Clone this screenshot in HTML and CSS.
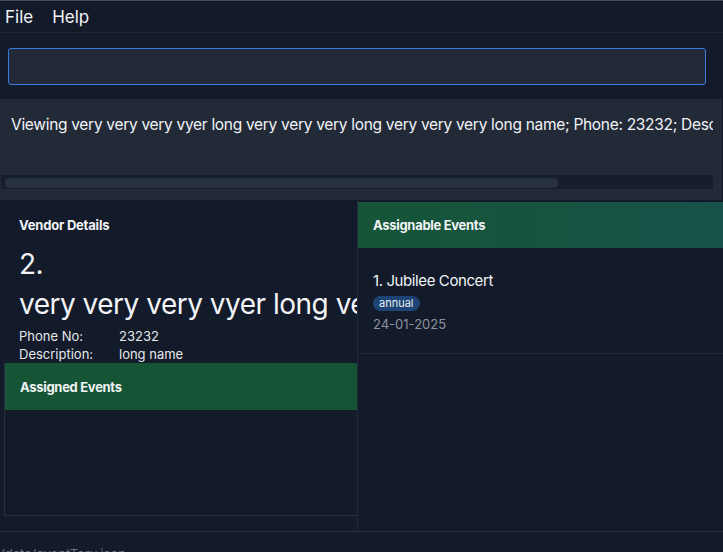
FILE: index.html
```html
<!DOCTYPE html>
<html>
<head>
<meta charset="utf-8">
<link rel="stylesheet" href="styles.css">
</head>
<body>
<div class="app">
  <div class="menubar">
    <span class="menu">File</span>
    <span class="menu">Help</span>
  </div>
  <div class="cmd-wrap">
    <div class="cmd"></div>
  </div>
  <div class="result">
    <div class="result-text">Viewing very very very vyer long very very very long very very very long name; Phone: 23232; Description: long name</div>
    <div class="hscroll"><div class="thumb"></div></div>
  </div>
  <div class="main">
    <div class="left">
      <div class="details">
        <div class="section-title">Vendor Details</div>
        <div class="big index">2.</div>
        <div class="big name">very very very vyer long very very very long very very very long name</div>
        <div class="field"><span class="label">Phone No:</span><span>23232</span></div>
        <div class="field"><span class="label">Description:</span><span>long name</span></div>
      </div>
      <div class="assigned">
        <div class="panel-head green">Assigned Events</div>
        <div class="panel-body"></div>
      </div>
    </div>
    <div class="right">
      <div class="panel-head teal">Assignable Events</div>
      <div class="list">
        <div class="card">
          <div class="card-title">1. Jubilee Concert</div>
          <span class="tag">annual</span>
          <div class="date">24-01-2025</div>
        </div>
      </div>
    </div>
  </div>
  <div class="status">/data/eventTory.json</div>
</div>
</body>
</html>
```
FILE: styles.css
```css
* { box-sizing: border-box; }
html, body { margin: 0; padding: 0; }
body {
  background: #131a29;
  font-family: Inter, "Noto Sans", sans-serif;
  color: #f1f3f6;
  width: 723px;
  height: 552px;
  overflow: hidden;
}
.app {
  border-top: 1px solid #4a4d52;
  height: 552px;
  display: flex;
  flex-direction: column;
}
.menubar {
  height: 32px;
  display: flex;
  align-items: center;
  gap: 19px;
  padding-left: 5px;
  border-bottom: 1px solid #1f2837;
  font-size: 17px;
}
.cmd-wrap {
  padding: 15px 17px 14px 8px;
}
.cmd {
  height: 37px;
  background: #222a38;
  border: 1px solid #3a7be0;
  border-radius: 3px;
}
.result {
  height: 101px;
  background: #222a38;
  padding: 16px 9px 0 1px;
  display: flex;
  flex-direction: column;
  overflow: hidden;
  border-right: 1px solid #111826;
}
.result-text {
  white-space: nowrap;
  font-size: 15.5px;
  letter-spacing: -0.3px;
  padding-left: 10px;
  height: 60px;
  line-height: 19px;
  overflow: hidden;
}
.hscroll {
  height: 14px;
  background: #161d2b;
  padding: 3px 4px;
}
.thumb {
  width: 553px;
  height: 10px;
  background: #283142;
  border-radius: 4px;
}
.main {
  flex: 1;
  display: flex;
  border-bottom: 1px solid #263040;
  min-height: 0;
}
.left {
  width: 357px;
  display: flex;
  flex-direction: column;
  overflow: hidden;
}
.details {
  padding: 16px 0 0 19px;
  height: 163px;
  overflow: hidden;
}
.section-title {
  font-size: 13px;
  font-weight: 700;
  letter-spacing: -0.2px;
  line-height: 18px;
}
.big {
  font-size: 28px;
  letter-spacing: -0.5px;
  line-height: 40px;
  white-space: nowrap;
}
.index { margin-top: 10px; }
.name { margin-bottom: 3px; }
.field {
  display: flex;
  font-size: 13px;
  line-height: 18px;
  color: #e6e8ec;
}
.field .label { width: 100px; }
.assigned {
  margin-left: 4px;
  height: 153px;
  display: flex;
  flex-direction: column;
  border: 1px solid #263040;
  border-top: none;
  border-right: none;
}
.panel-head {
  height: 47px;
  display: flex;
  align-items: center;
  font-size: 13px;
  font-weight: 700;
  letter-spacing: -0.3px;
  padding-left: 15px;
}
.green { background: #155536; }
.teal {
  background: linear-gradient(90deg, #165537 0%, #17534a 100%);
  height: 46px;
  margin-top: 2px;
}
.panel-body { flex: 1; }
.right {
  flex: 1;
  display: flex;
  flex-direction: column;
  border-left: 1px solid #222a38;
}
.right .panel-head { padding-left: 15px; }
.list { flex: 1; }
.card {
  padding: 23px 0 0 15px;
  height: 106px;
  border-bottom: 1px solid #222a38;
}
.card-title {
  font-size: 15px;
  letter-spacing: -0.4px;
  line-height: 20px;
}
.tag {
  display: inline-block;
  background: #1d4474;
  color: #e8eef7;
  font-size: 11px;
  line-height: 15px;
  padding: 0 6px;
  border-radius: 8px;
  margin-top: 3px;
}
.date {
  font-size: 13px;
  color: #8c93a0;
  line-height: 16px;
  margin-top: 5px;
}
.status {
  height: 20px;
  font-size: 13px;
  color: #6b7280;
  padding: 14px 0 0 0;
  white-space: nowrap;
}
```
